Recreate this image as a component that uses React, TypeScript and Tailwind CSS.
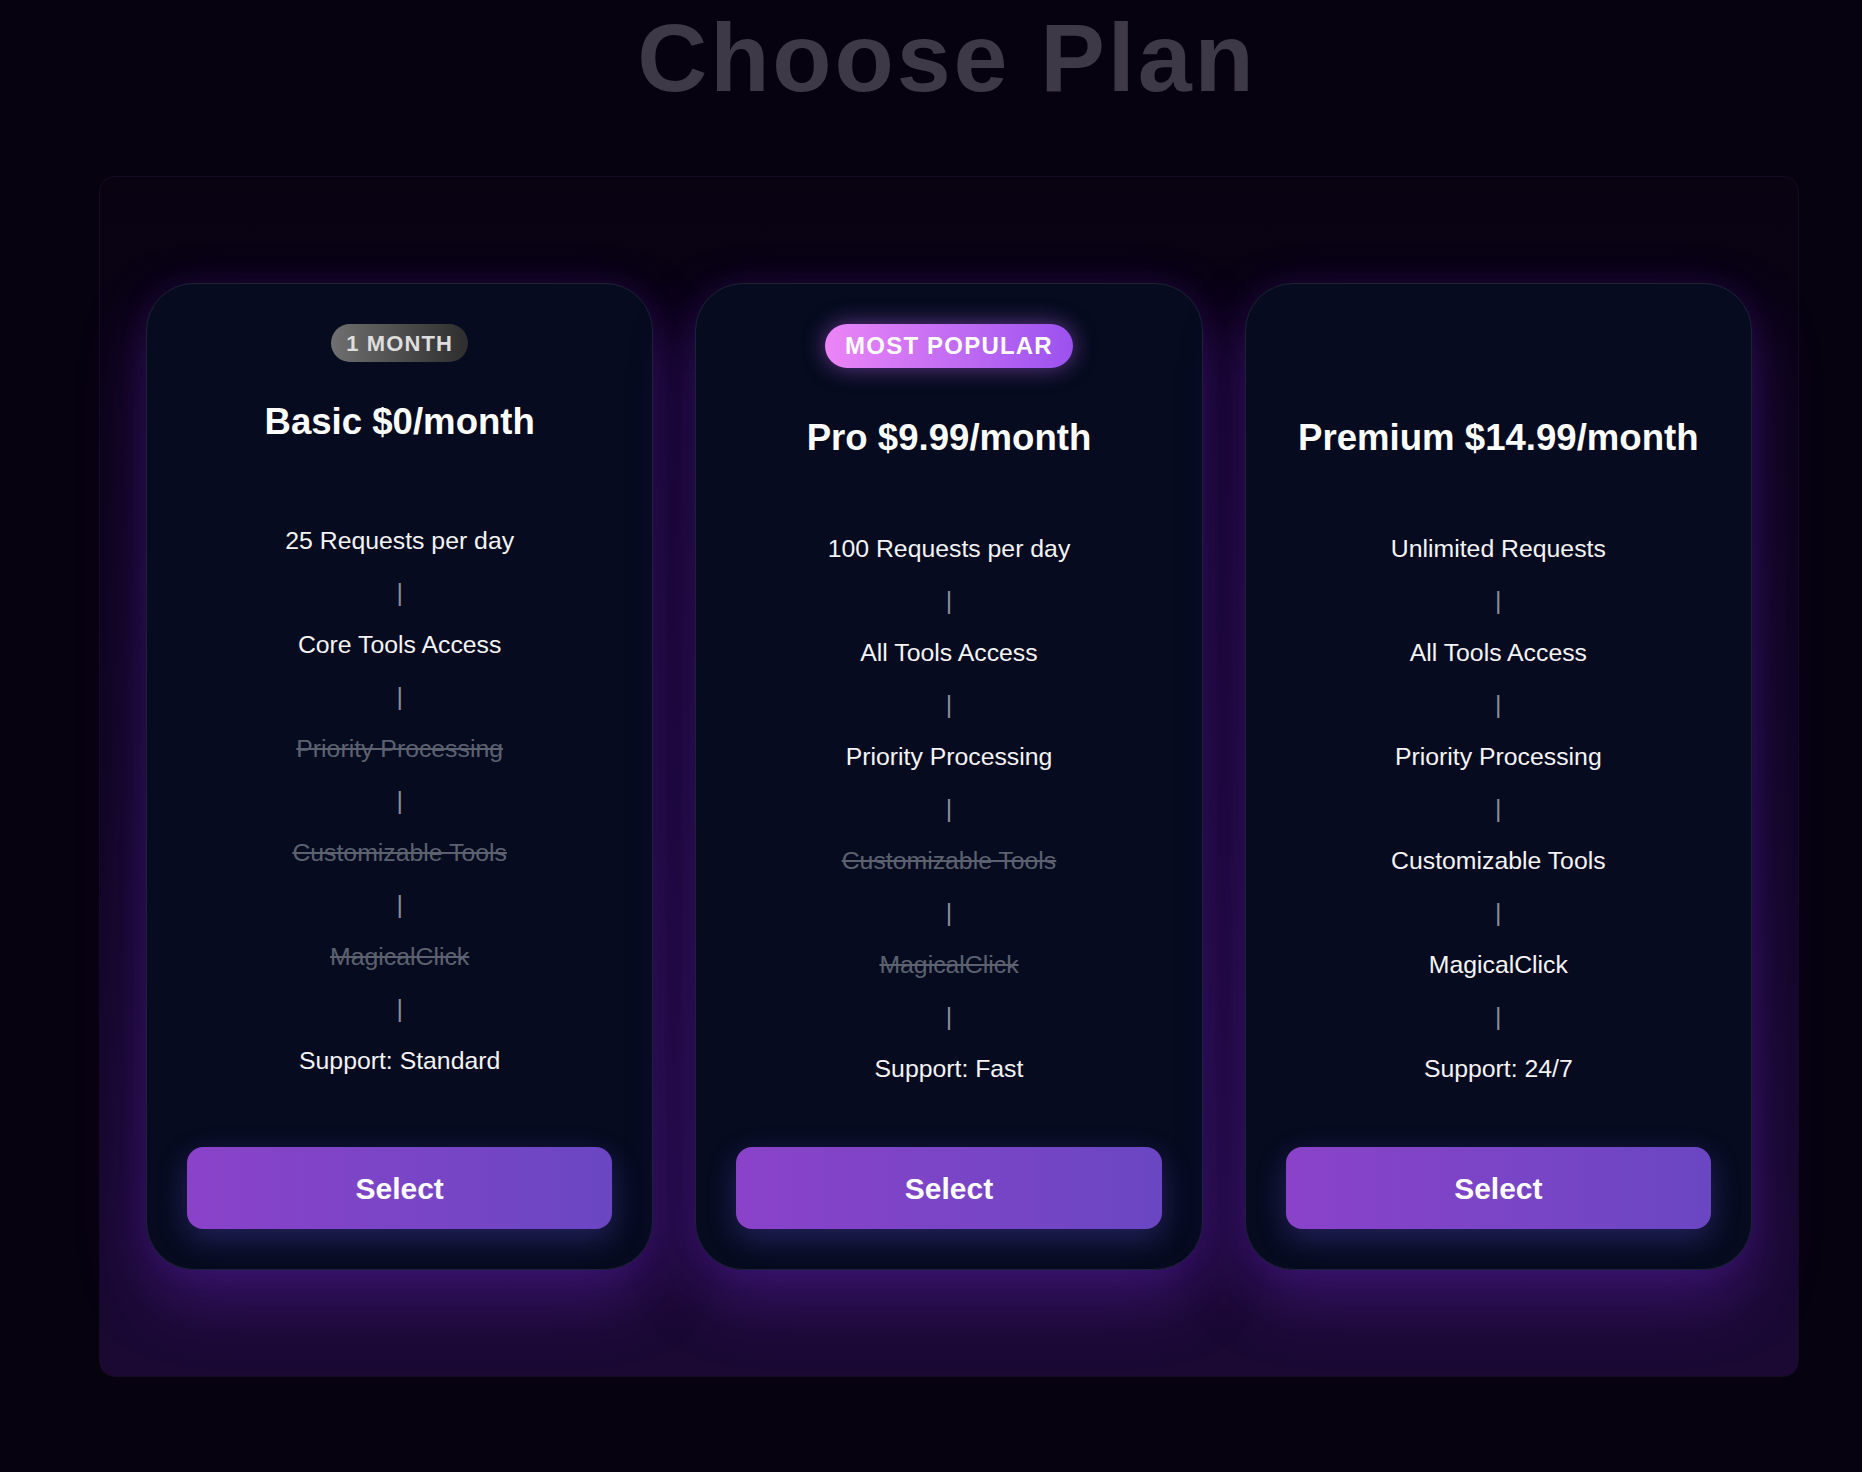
import React from "react";

type Feature = { text: string; off?: boolean };
type Plan = {
  title: string;
  badge?: "month" | "popular";
  placeholder?: boolean;
  features: Feature[];
};

const plans: Plan[] = [
  {
    title: "Basic $0/month",
    badge: "month",
    features: [
      { text: "25 Requests per day" },
      { text: "Core Tools Access" },
      { text: "Priority Processing", off: true },
      { text: "Customizable Tools", off: true },
      { text: "MagicalClick", off: true },
      { text: "Support: Standard" },
    ],
  },
  {
    title: "Pro $9.99/month",
    badge: "popular",
    features: [
      { text: "100 Requests per day" },
      { text: "All Tools Access" },
      { text: "Priority Processing" },
      { text: "Customizable Tools", off: true },
      { text: "MagicalClick", off: true },
      { text: "Support: Fast" },
    ],
  },
  {
    title: "Premium $14.99/month",
    placeholder: true,
    features: [
      { text: "Unlimited Requests" },
      { text: "All Tools Access" },
      { text: "Priority Processing" },
      { text: "Customizable Tools" },
      { text: "MagicalClick" },
      { text: "Support: 24/7" },
    ],
  },
];

function Card({ plan }: { plan: Plan }) {
  const tall = plan.badge === "popular" || plan.placeholder;
  return (
    <div className="flex h-[987px] flex-col items-center rounded-[48px] border border-[#1c2234] bg-[#060b1f] p-10 shadow-[0_30px_64px_rgba(118,40,220,0.34),0_0_30px_rgba(110,40,210,0.12)]">
      {plan.badge === "month" && (
        <div className="flex h-[38px] items-center justify-center rounded-full bg-gradient-to-r from-[#707070] to-[#2e2e2e] px-[15px] text-[22px] font-bold tracking-[0.05em] text-[#dedede]">
          1 MONTH
        </div>
      )}
      {plan.badge === "popular" && (
        <div className="flex h-[44px] items-center justify-center rounded-full bg-gradient-to-r from-[#ec85f6] to-[#9c51ef] px-[20px] text-[24px] font-bold tracking-[0.05em] text-white shadow-[0_0_22px_rgba(190,100,245,0.5)]">
          MOST POPULAR
        </div>
      )}
      {plan.placeholder && <div className="h-[44px]" />}
      <h2
        className={`${tall ? "mt-[50px]" : "mt-10"} text-[36.6px] font-bold leading-[40px] text-white`}
      >
        {plan.title}
      </h2>
      <ul
        className={`${tall ? "mt-[77px]" : "mt-[85px]"} flex flex-col items-center gap-6 text-[24.8px] leading-[28px]`}
      >
        {plan.features.map((f, i) => (
          <React.Fragment key={f.text}>
            {i > 0 && <li className="text-[#8a8e99]">|</li>}
            <li className={f.off ? "text-[#5c6170] line-through" : "text-[#f4f4f6]"}>{f.text}</li>
          </React.Fragment>
        ))}
      </ul>
      <button className="mt-auto h-[82px] w-full rounded-2xl bg-gradient-to-r from-[#8a42c9] to-[#6a46c3] text-[30px] font-bold text-white shadow-[0_10px_30px_rgba(100,80,230,0.32)]">
        Select
      </button>
    </div>
  );
}

export default function App() {
  return (
    <div
      className="min-h-[1472px] w-full overflow-hidden bg-[#070210] pb-[96px] pt-[9px]"
      style={{ fontFamily: '"Liberation Sans", Arial, Helvetica, sans-serif' }}
    >
      <h1 className="pl-[32px] text-center text-[97px] font-bold leading-none tracking-[0.03em] text-[#3e3946]">
        Choose Plan
      </h1>
      <div className="ml-[99px] mt-[70px] w-[1700px] rounded-2xl border border-[#150b22] bg-gradient-to-b from-[#080211] via-[#0e0520] to-[#1b0934] px-[46px] py-[106px]">
        <div className="grid grid-cols-3 gap-[42px]">
          {plans.map((p) => (
            <Card key={p.title} plan={p} />
          ))}
        </div>
      </div>
    </div>
  );
}
